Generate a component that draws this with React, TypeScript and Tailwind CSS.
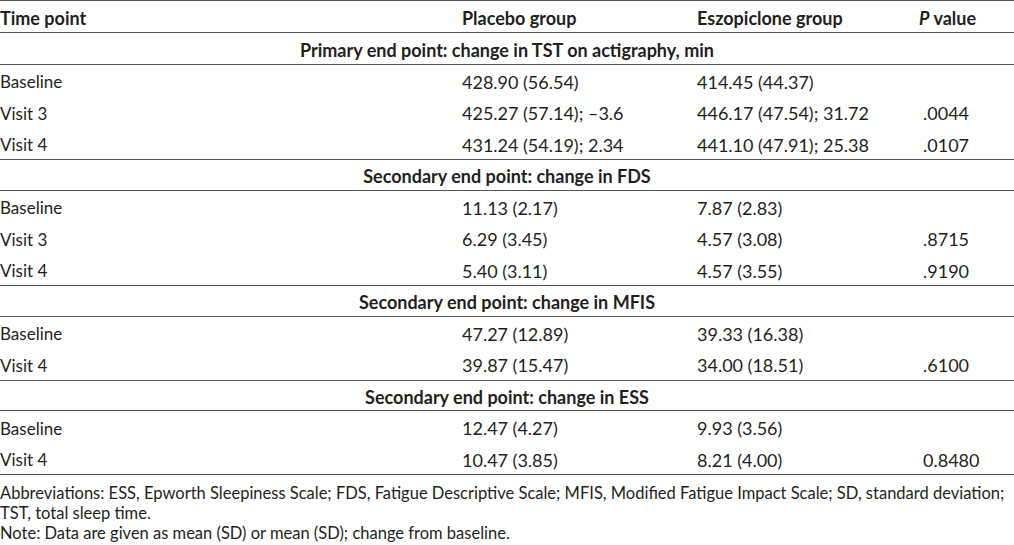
const groups = [
  {
    title: "Primary end point: change in TST on actigraphy, min",
    rows: [
      ["Baseline", "428.90 (56.54)", "414.45 (44.37)", ""],
      ["Visit 3", "425.27 (57.14); \u20133.6", "446.17 (47.54); 31.72", ".0044"],
      ["Visit 4", "431.24 (54.19); 2.34", "441.10 (47.91); 25.38", ".0107"],
    ],
  },
  {
    title: "Secondary end point: change in FDS",
    rows: [
      ["Baseline", "11.13 (2.17)", "7.87 (2.83)", ""],
      ["Visit 3", "6.29 (3.45)", "4.57 (3.08)", ".8715"],
      ["Visit 4", "5.40 (3.11)", "4.57 (3.55)", ".9190"],
    ],
  },
  {
    title: "Secondary end point: change in MFIS",
    rows: [
      ["Baseline", "47.27 (12.89)", "39.33 (16.38)", ""],
      ["Visit 4", "39.87 (15.47)", "34.00 (18.51)", ".6100"],
    ],
  },
  {
    title: "Secondary end point: change in ESS",
    rows: [
      ["Baseline", "12.47 (4.27)", "9.93 (3.56)", ""],
      ["Visit 4", "10.47 (3.85)", "8.21 (4.00)", "0.8480"],
    ],
  },
];

function Row({ cells }: { cells: string[] }) {
  return (
    <div className="grid grid-cols-[462px_235px_226px_1fr] h-[31.5px] items-center pt-[3px] text-[18px]">
      <div className="text-[17px]">{cells[0]}</div>
      <div>{cells[1]}</div>
      <div>{cells[2]}</div>
      <div>{cells[3]}</div>
    </div>
  );
}

export default function App() {
  return (
    <div className="w-[1014px] h-[545px] bg-white text-[#231f20] text-[17px] leading-none font-['Lato',sans-serif] overflow-hidden">
      <div className="border-t-[1.5px] border-[#555]">
        <div className="grid grid-cols-[462px_235px_226px_1fr] h-[32px] items-center pt-[2px] text-[18px] font-bold border-b-[1.5px] border-[#555]">
          <div>Time point</div>
          <div>Placebo group</div>
          <div>Eszopiclone group</div>
          <div className="-ml-1">
            <i>P</i> value
          </div>
        </div>
        {groups.map((g, gi) => (
          <div key={gi}>
            <div
              className={`h-[31.5px] flex items-center justify-center pt-[3px] text-[18px] font-bold border-b-[1.5px] border-[#555] ${
                gi > 0 ? "border-t-[1.5px]" : ""
              }`}
            >
              {g.title}
            </div>
            {g.rows.map((r, ri) => (
              <Row key={ri} cells={r} />
            ))}
          </div>
        ))}
      </div>
      <div className="border-t-[1.5px] border-[#555] pt-[8px] text-[16.5px] leading-[20px]">
        <p>
          Abbreviations: ESS, Epworth Sleepiness Scale; FDS, Fatigue Descriptive Scale; MFIS, Modified Fatigue Impact Scale; SD, standard deviation; TST, total sleep time.
        </p>
        <p>Note: Data are given as mean (SD) or mean (SD); change from baseline.</p>
      </div>
    </div>
  );
}
